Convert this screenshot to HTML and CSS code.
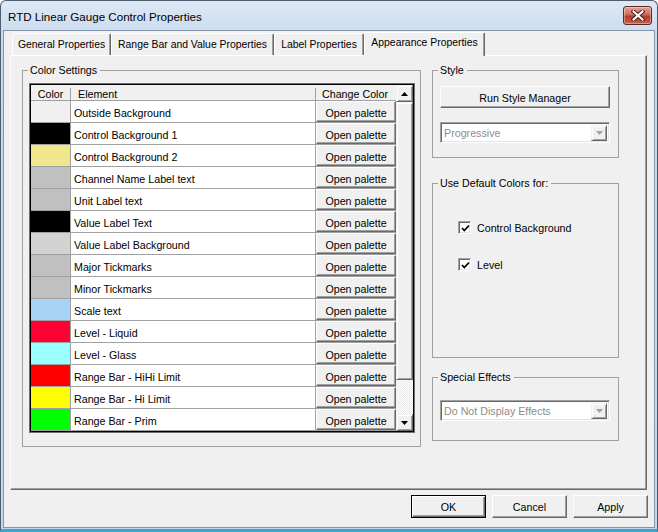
FILE: index.html
```html
<!DOCTYPE html>
<html>
<head>
<meta charset="utf-8">
<link rel="stylesheet" href="styles.css">
</head>
<body>
<div class="win">
  <div class="titlebar">
    <span class="title">RTD Linear Gauge Control Properties</span>
    <div class="close">
      <svg width="14" height="11" viewBox="0 0 14 11">
        <path d="M2.5 1.5 L11.5 9.5 M11.5 1.5 L2.5 9.5" stroke="#4a2424" stroke-width="4" stroke-linecap="square" fill="none"/>
        <path d="M2.5 1.5 L11.5 9.5 M11.5 1.5 L2.5 9.5" stroke="#ffffff" stroke-width="2" stroke-linecap="square" fill="none"/>
      </svg>
    </div>
  </div>
  <div class="client">
    <div class="tabs">
      <div class="tab t1">General Properties</div>
      <div class="tab t2">Range Bar and Value Properties</div>
      <div class="tab t3">Label Properties</div>
      <div class="tab t4 sel">Appearance Properties</div>
    </div>
    <div class="panel">
      <div class="group colors">
        <span class="legend">Color Settings</span>
        <div class="tbl">
          <div class="tbl-in">
            <div class="list">
              <div class="hdr">
                <div class="h hc">Color</div>
                <div class="h he">Element</div>
                <div class="h hb">Change Color</div>
              </div>
              <div class="rows">
                <div class="sw" style="background:#f0f0f0"></div><div class="el">Outside Background</div><div class="bc"><div class="btn">Open palette</div></div>
                <div class="sw" style="background:#000000"></div><div class="el">Control Background 1</div><div class="bc"><div class="btn">Open palette</div></div>
                <div class="sw" style="background:#f0e68c"></div><div class="el">Control Background 2</div><div class="bc"><div class="btn">Open palette</div></div>
                <div class="sw" style="background:#c0c0c0"></div><div class="el">Channel Name Label text</div><div class="bc"><div class="btn">Open palette</div></div>
                <div class="sw" style="background:#c0c0c0"></div><div class="el">Unit Label text</div><div class="bc"><div class="btn">Open palette</div></div>
                <div class="sw" style="background:#000000"></div><div class="el">Value Label Text</div><div class="bc"><div class="btn">Open palette</div></div>
                <div class="sw" style="background:#d3d3d3"></div><div class="el">Value Label Background</div><div class="bc"><div class="btn">Open palette</div></div>
                <div class="sw" style="background:#c0c0c0"></div><div class="el">Major Tickmarks</div><div class="bc"><div class="btn">Open palette</div></div>
                <div class="sw" style="background:#c0c0c0"></div><div class="el">Minor Tickmarks</div><div class="bc"><div class="btn">Open palette</div></div>
                <div class="sw" style="background:#a6d2f6"></div><div class="el">Scale text</div><div class="bc"><div class="btn">Open palette</div></div>
                <div class="sw" style="background:#ff0033"></div><div class="el">Level - Liquid</div><div class="bc"><div class="btn">Open palette</div></div>
                <div class="sw" style="background:#99ffff"></div><div class="el">Level - Glass</div><div class="bc"><div class="btn">Open palette</div></div>
                <div class="sw" style="background:#ff0000"></div><div class="el">Range Bar - HiHi Limit</div><div class="bc"><div class="btn">Open palette</div></div>
                <div class="sw" style="background:#ffff00"></div><div class="el">Range Bar - Hi Limit</div><div class="bc"><div class="btn">Open palette</div></div>
                <div class="sw" style="background:#00ff00"></div><div class="el">Range Bar - Prim</div><div class="bc"><div class="btn">Open palette</div></div>
                <div class="sw" style="background:#ffff00"></div><div class="el"></div><div class="bc"><div class="btn"></div></div>
              </div>
            </div>
            <div class="sbar">
              <div class="sbtn">
                <svg width="7" height="4" viewBox="0 0 7 4"><polygon points="0,4 3.5,0 7,4" fill="#000"/></svg>
              </div>
              <div class="thumb"></div>
              <div class="track"></div>
              <div class="sbtn">
                <svg width="7" height="4" viewBox="0 0 7 4"><polygon points="0,0 7,0 3.5,4" fill="#000"/></svg>
              </div>
            </div>
          </div>
        </div>
      </div>
      <div class="rcol">
        <div class="group style">
          <span class="legend">Style</span>
          <div class="btn wide">Run Style Manager</div>
          <div class="combo">
            <span class="ctext">Progressive</span>
            <div class="carrow"><svg width="7" height="4" viewBox="0 0 7 4"><polygon points="0,0 7,0 3.5,4" fill="#a0a0a0"/></svg></div>
          </div>
        </div>
        <div class="group defaults">
          <span class="legend">Use Default Colors for:</span>
          <div class="chk">
            <div class="box"><svg width="9" height="9" viewBox="0 0 9 9"><polyline points="1,4 3.3,6.5 8,1.5" stroke="#000" stroke-width="1.8" fill="none"/></svg></div>
            <span>Control Background</span>
          </div>
          <div class="chk second">
            <div class="box"><svg width="9" height="9" viewBox="0 0 9 9"><polyline points="1,4 3.3,6.5 8,1.5" stroke="#000" stroke-width="1.8" fill="none"/></svg></div>
            <span>Level</span>
          </div>
        </div>
        <div class="group effects">
          <span class="legend">Special Effects</span>
          <div class="combo">
            <span class="ctext">Do Not Display Effects</span>
            <div class="carrow"><svg width="7" height="4" viewBox="0 0 7 4"><polygon points="0,0 7,0 3.5,4" fill="#a0a0a0"/></svg></div>
          </div>
        </div>
      </div>
    </div>
    <div class="buttons">
      <div class="btn dlg def">OK</div>
      <div class="btn dlg">Cancel</div>
      <div class="btn dlg">Apply</div>
    </div>
  </div>
</div>
</body>
</html>
```

FILE: styles.css
```css
* { box-sizing: border-box; }
html, body { margin: 0; padding: 0; background: #ffffff; }
body { font-family: "Liberation Sans", Arial, sans-serif; font-size: 10.7px; color: #000; }

.win {
  width: 658px;
  height: 532px;
  background: linear-gradient(#dde8f5, #c8daee 40px, #c4d7ec);
  border: 1px solid #4d5d70;
  border-radius: 6px 6px 0 0;
  display: flex;
  flex-direction: column;
  border-bottom: 3px solid #3aa3d8;
}

.titlebar {
  height: 29px;
  display: flex;
  align-items: flex-start;
  justify-content: space-between;
  padding: 0 5px 0 7px;
}
.title {
  font-size: 11.6px;
  margin-top: 9px;
  color: #000;
}
.close {
  margin-top: 5px;
  width: 29px;
  height: 19px;
  border: 1px solid #5a2a2a;
  border-radius: 3px;
  background: linear-gradient(#e3a495, #cf6a58 45%, #b83c2b 55%, #c8604c);
  display: flex;
  align-items: center;
  justify-content: center;
  box-shadow: inset 0 0 0 1px rgba(255,255,255,0.35);
}

.client {
  margin: 0 2px;
  height: 498px;
  background: #f0f0f0;
  border: 1px solid #8596aa;
  padding: 1px 6px 0 6px;
  display: flex;
  flex-direction: column;
}

.tabs {
  height: 24px;
  display: flex;
  align-items: flex-end;
  padding-left: 2px;
  margin-bottom: -1px;
  position: relative;
  z-index: 2;
}
.tab {
  height: 22px;
  font-size: 10.4px;
  border-top: 1px solid #ffffff;
  border-left: 1px solid #ffffff;
  border-right: 1px solid #696969;
  box-shadow: inset -1px 0 0 #a0a0a0;
  border-radius: 2px 2px 0 0;
  padding: 5px 0 0 0;
  white-space: nowrap;
  text-align: center;
  margin-bottom: 1px;
}
.t1 { width: 99px; }
.t2 { width: 163px; }
.t3 { width: 90px; }
.t4 { width: 121px; }
.tab.sel {
  height: 24px;
  margin-bottom: 0;
  padding-top: 4px;
  background: #f0f0f0;
}

.panel {
  width: 637px;
  height: 435px;
  border-top: 1px solid #ffffff;
  border-left: 1px solid #ffffff;
  border-right: 1px solid #696969;
  border-bottom: 1px solid #696969;
  box-shadow: inset -1px -1px 0 #a0a0a0;
  padding: 14px 0 0 11px;
  display: flex;
  align-items: flex-start;
}

.group {
  position: relative;
  border: 1px solid #a0a0a0;
}
.legend {
  position: absolute;
  top: -7px;
  left: 5px;
  padding: 0 3px 0 2px;
  line-height: 13px;
  background: #f0f0f0;
  white-space: nowrap;
}

.colors {
  width: 399px;
  height: 377px;
  padding: 12px 0 0 6px;
}
.tbl {
  width: 386px;
  height: 350px;
  border: 1px solid #6e6e6e;
}
.tbl-in {
  height: 100%;
  border: 1px solid #000000;
  display: flex;
  background: #ffffff;
}
.list {
  width: 365px;
  overflow: hidden;
}
.hdr {
  height: 16px;
  background: #f0f0f0;
  border-bottom: 1px solid #a0a0a0;
  display: flex;
  align-items: center;
}
.h {
  height: 12px;
  line-height: 12px;
  margin-top: 2px;
  white-space: nowrap;
}
.hc { width: 40px; border-right: 1px solid #a0a0a0; text-align: center; }
.he { width: 245px; border-right: 1px solid #a0a0a0; padding-left: 7px; }
.hb { width: 80px; padding-left: 6px; }

.rows {
  display: grid;
  grid-template-columns: 39px 244px 80px;
  grid-auto-rows: 21px;
  gap: 1px;
  background: #a0a0a0;
  border-right: 1px solid #a0a0a0;
}
.el {
  background: #ffffff;
  padding: 6px 0 0 3px;
  line-height: 13px;
  white-space: nowrap;
}
.bc { background: #f0f0f0; display: flex; }

.btn {
  background: #f0f0f0;
  border: 1px solid;
  border-color: #ffffff #696969 #696969 #ffffff;
  box-shadow: inset -1px -1px 0 #a0a0a0;
  display: flex;
  align-items: center;
  justify-content: center;
  white-space: nowrap;
}
.bc .btn { width: 80px; height: 21px; padding-top: 2px; }

.sbar {
  width: 17px;
  display: flex;
  flex-direction: column;
}
.sbtn {
  height: 17px;
  background: #f0f0f0;
  border: 1px solid;
  border-color: #f0f0f0 #696969 #696969 #f0f0f0;
  box-shadow: inset 1px 1px 0 #ffffff, inset -1px -1px 0 #a0a0a0;
  display: flex;
  align-items: center;
  justify-content: center;
}
.thumb {
  height: 278px;
  background: #f0f0f0;
  border: 1px solid;
  border-color: #f0f0f0 #696969 #696969 #f0f0f0;
  box-shadow: inset 1px 1px 0 #ffffff, inset -1px -1px 0 #a0a0a0;
}
.track {
  flex: 1;
  background: repeating-conic-gradient(#ffffff 0 25%, #e8e8e8 0 50%) 0 0 / 2px 2px;
}

.rcol {
  width: 187px;
  margin-left: 11px;
  display: flex;
  flex-direction: column;
}
.style {
  height: 88px;
  padding: 15px 0 0 7px;
}
.wide { width: 170px; height: 22px; padding-top: 1px; }

.combo {
  width: 170px;
  height: 21px;
  margin-top: 14px;
  border: 1px solid;
  border-color: #a0a0a0 #ffffff #ffffff #a0a0a0;
  box-shadow: inset 1px 1px 0 #696969, inset -1px -1px 0 #e3e3e3;
  background: #ffffff;
  display: flex;
  align-items: center;
  justify-content: space-between;
  padding: 2px 2px 2px 3px;
}
.ctext { color: #8d8d8d; padding-top: 1px; white-space: nowrap; }
.carrow {
  width: 16px;
  height: 16px;
  background: #f0f0f0;
  border: 1px solid;
  border-color: #f0f0f0 #696969 #696969 #f0f0f0;
  box-shadow: inset 1px 1px 0 #ffffff, inset -1px -1px 0 #a0a0a0;
  display: flex;
  align-items: center;
  justify-content: center;
}

.defaults {
  height: 175px;
  margin-top: 25px;
  padding: 37px 0 0 25px;
}
.chk {
  display: flex;
  align-items: center;
  height: 13px;
}
.chk.second { margin-top: 24px; }
.box {
  width: 13px;
  height: 13px;
  border: 1px solid;
  border-color: #a0a0a0 #ffffff #ffffff #a0a0a0;
  box-shadow: inset 1px 1px 0 #696969, inset -1px -1px 0 #e3e3e3;
  background: #ffffff;
  display: flex;
  align-items: center;
  justify-content: center;
  margin-right: 6px;
  padding: 1px 0 0 1px;
}
.chk span { padding-top: 1px; }

.effects {
  height: 64px;
  margin-top: 19px;
  padding: 8px 0 0 7px;
}

.buttons {
  display: flex;
  justify-content: flex-end;
  gap: 6px;
  margin-top: 5px;
}
.dlg { width: 75px; height: 23px; padding-top: 1px; }
.dlg.def {
  border-color: #000 #000 #000 #000;
  box-shadow: inset 1px 1px 0 #ffffff, inset -1px -1px 0 #696969, inset -2px -2px 0 #a0a0a0;
}
```
